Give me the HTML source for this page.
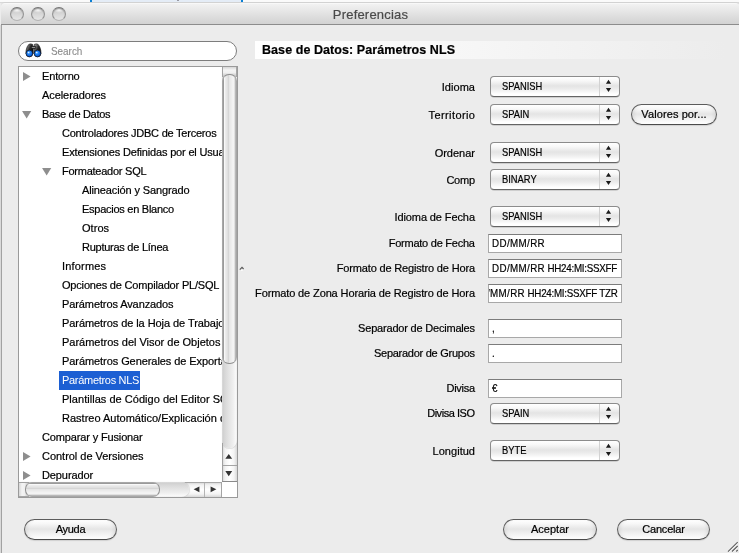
<!DOCTYPE html>
<html><head><meta charset="utf-8">
<style>
*{margin:0;padding:0;box-sizing:border-box}
html,body{width:739px;height:553px;overflow:hidden;background:#ececec;-webkit-text-stroke:0.2px currentColor;font-family:"Liberation Sans",sans-serif;font-size:11px;color:#000}
.a{position:absolute}
#topstrip{left:0;top:0;width:739px;height:3px;background:#fafafa;border-bottom:1px solid #d9d9d9}
#tsel{left:90px;top:0;width:153px;height:2px;background:#e4ecf6;border-left:2px solid #0a7fd3;border-right:2px solid #0a7fd3}
#win{left:1px;top:2px;width:739px;height:560px;border-top:1px solid #d2d2d2;border-top-left-radius:4px;border-top-right-radius:5px;background:#ececec;overflow:hidden;box-shadow:inset 1px 0 0 #c4c4c4}
#winl{left:1px;top:25px;width:1px;height:528px;background:#a2a2a2}
#shadowl{left:0;top:25px;width:1px;height:528px;background:#dadada}
#title{left:0;top:0;width:100%;height:22px;background:linear-gradient(#f2f2f2,#e8e8e8 30%,#d2d2d2);border-bottom:1px solid #8c8c8c;border-top:1px solid #f8f8f8}
#titleline{left:0;top:22px;width:100%;height:1px;background:#f6f6f6}
.tl{top:4px;width:14px;height:14px;border-radius:50%;border:1px solid #929292;border-top-color:#737373;border-bottom-color:#b4b4b4;background:radial-gradient(ellipse 45% 22% at 50% 18%,#f8f8f8 0,rgba(248,248,248,0) 100%) no-repeat,linear-gradient(#bdbdbd,#d2d2d2 35%,#dadada 60%,#e6e6e6);box-shadow:inset 0 1px 1px rgba(0,0,0,.25)}
#ttext{left:1px;top:7px;width:739px;text-align:center;font-size:13px;color:#4a4a4a;line-height:15px;letter-spacing:.2px}
.txt{white-space:nowrap;line-height:13px}
.lbl{white-space:nowrap;line-height:13px;text-align:right;right:264px}
.combo{left:490px;width:130px;height:21px;border:1px solid #8c8c8c;border-bottom-color:#646464;border-radius:4px;background:linear-gradient(#ffffff 0%,#f8f8f8 20%,#e4e4e4 47%,#ebebeb 62%,#ffffff 90%);box-shadow:0 0.5px 0.5px rgba(0,0,0,.25)}
.combo .v{position:absolute;left:11px;top:3px;line-height:13px;white-space:nowrap;transform:scaleX(0.85);transform-origin:0 0}
.combo .sep{position:absolute;left:108px;top:0;width:1px;height:19px;background:#d2d2d2}
.combo .arr{position:absolute;left:114px;top:1px}
.field{left:488px;width:134px;height:19px;background:#fff;border:1px solid #a8a8a8;border-top-color:#7c7c7c;overflow:hidden}
.field .v{position:absolute;left:3px;top:2px;line-height:13px;white-space:nowrap;transform:scaleX(0.89);transform-origin:0 0}
.field .vr{left:auto;right:3px;transform-origin:100% 0}
.btn{height:21px;border:1px solid #5c5c5c;border-bottom-color:#4a4a4a;border-radius:11px;background:linear-gradient(#ffffff 0%,#f7f7f7 20%,#e5e5e5 48%,#ededed 62%,#ffffff 100%);text-align:center;line-height:19px;box-shadow:0 1px 1px rgba(0,0,0,.12),inset 4px 0 4px -3px rgba(0,0,0,.10),inset -4px 0 4px -3px rgba(0,0,0,.10)}
#tree{left:18px;top:66px;width:220px;height:432px;background:#fff;border:1px solid #9a9a9a;overflow:hidden}
.ti{position:absolute;height:19px;line-height:19px;white-space:nowrap;letter-spacing:-0.3px}
.tri{position:absolute}
.tri-r{position:absolute;width:0;height:0;border-top:4.5px solid transparent;border-bottom:4.5px solid transparent;border-left:8px solid #8e8e8e}
.tri-d{position:absolute;width:0;height:0;border-left:4.5px solid transparent;border-right:4.5px solid transparent;border-top:8px solid #8e8e8e}

#vs{position:absolute;left:203px;top:0;width:15px;height:415px;border-bottom:1px solid #8a8a8a;background:linear-gradient(to right,#cfcfcf,#f2f2f2 20%,#ffffff 50%,#f4f4f4 80%,#d8d8d8)}
#vtrack{position:absolute;left:0;top:0;width:15px;height:381px;border-bottom-left-radius:7px 8px;border-bottom-right-radius:7px 8px;background:linear-gradient(to right,#dadada 0,#d2d2d2 1.5px,#d8d8d8 3px,#e4e4e4 7px,#efefef 11px,#f8f8f8 13.5px,#f0f0f0 15px);box-shadow:0 1px 1px rgba(0,0,0,.12)}
#vtop{position:absolute;left:0;top:0;width:15px;height:10px;border-left:1px solid #a2a2a2;border-right:1px solid #a6a6a6;background:linear-gradient(#d6d6d6,#f4f4f4 30%,#f0f0f0 55%,#c8c8c8 90%,#b4b4b4)}
#vthumb{position:absolute;left:0;top:7px;width:15px;height:290px;border:1px solid #8f8f8f;border-left-color:#a8a8a8;border-right-color:#a6a6a6;border-radius:7px;background:linear-gradient(to right,#9a9a9a 0.5px,#f8f8f8 1.5px,#ececec 2.5px,#e6e6e6 3.5px,#e0e0e0 4.5px,#d6d6d6 5.5px,#e6e6e6 6.5px,#eaeaea 7.5px,#eeeeee 8.5px,#f2f2f2 9.5px,#f4f4f4 11px,#b8b8b8 12.5px)}
#vbl{position:absolute;left:0;top:376px;width:1px;height:38px;background:#a0a0a0}
#vsep{position:absolute;left:0;top:398px;width:15px;height:1px;background:#a4a4a4}
#hs{position:absolute;left:0;top:415px;width:203px;height:15px;background:linear-gradient(#cfcfcf,#f2f2f2 20%,#ffffff 50%,#f4f4f4 80%,#d8d8d8)}
#htrack{position:absolute;left:0;top:0;width:170px;height:15px;border-top-right-radius:8px 7px;border-bottom-right-radius:8px 7px;background:linear-gradient(#dadada 0,#d2d2d2 1.5px,#d8d8d8 3px,#e4e4e4 7px,#efefef 11px,#f8f8f8 13.5px,#f0f0f0 15px);box-shadow:1px 0 1px rgba(0,0,0,.12)}
#hleft{position:absolute;left:0;top:0;width:10px;height:15px;border-top:1px solid #a2a2a2;border-bottom:1px solid #a6a6a6;background:linear-gradient(to right,#d6d6d6,#f4f4f4 30%,#f0f0f0 55%,#c8c8c8 90%,#b4b4b4)}
#hthumb{position:absolute;left:6px;top:0;width:135px;height:15px;border:1px solid #8f8f8f;border-top-color:#a8a8a8;border-bottom-color:#a6a6a6;border-radius:7px;background:linear-gradient(#9a9a9a 0.5px,#f8f8f8 1.5px,#ececec 2.5px,#e6e6e6 3.5px,#e0e0e0 4.5px,#d6d6d6 5.5px,#e6e6e6 6.5px,#eaeaea 7.5px,#eeeeee 8.5px,#f2f2f2 9.5px,#f4f4f4 11px,#b8b8b8 12.5px)}
#hsep{position:absolute;left:185px;top:0;width:1px;height:15px;background:#b4b4b4}
#corner{position:absolute;left:203px;top:415px;width:15px;height:15px;background:#fff}
.sarr{position:absolute}
.sel{background:#1c5fd3;color:#fff;-webkit-text-stroke:0}
#root{position:absolute;left:0;top:0;width:739px;height:553px;will-change:transform}
</style></head><body><div id="root">
<div id="topstrip" class="a"></div>
<div id="tsel" class="a"></div>
<div class="a" style="left:92px;top:2px;width:149px;height:1px;background:#cfd6de"></div>
<div class="a" style="left:177px;top:0;width:2px;height:1px;background:#9a9aa4"></div>
<div id="shadowl" class="a"></div>
<div id="win" class="a">
  <div id="title" class="a"></div>
  <div class="a tl" style="left:9px"></div>
  <div class="a tl" style="left:30px"></div>
  <div class="a tl" style="left:51px"></div>
</div>
<div id="winl" class="a"></div>
<div id="ttext" class="a">Preferencias</div>

<!-- search -->
<div class="a" style="left:18px;top:41px;width:219px;height:20px;border:1.5px solid #7d7d7d;border-radius:10px;background:#fff"></div>
<div class="a txt" style="left:50.5px;top:45px;color:#8a8a8a;transform:scaleX(.9);transform-origin:0 0;-webkit-text-stroke:0.1px #8a8a8a">Search</div>
<svg class="a" style="left:22px;top:41px" width="24" height="20" viewBox="0 0 24 20">
<defs>
<linearGradient id="bg1" x1="0" x2="1" y1="0" y2="0.6"><stop offset="0" stop-color="#b4b4b4"/><stop offset=".35" stop-color="#6a6a6a"/><stop offset=".6" stop-color="#2a2a2a"/><stop offset="1" stop-color="#0e0e0e"/></linearGradient>
<radialGradient id="lens" cx=".42" cy=".38" r=".65"><stop offset="0" stop-color="#8ec8ff"/><stop offset=".3" stop-color="#2a8af8"/><stop offset=".8" stop-color="#0a58d0"/><stop offset="1" stop-color="#05349a"/></radialGradient>
</defs>
<path d="M6.8 3.4Q8.6 2.4 10.6 3.4L11 8V12.5H3.9L4.2 9Q4.9 5.4 6.8 3.4Z" fill="url(#bg1)" stroke="#151515" stroke-width=".7"/>
<path d="M16.1 3.4Q14.3 2.4 12.3 3.4L11.9 8V12.5H19L18.7 9Q18 5.4 16.1 3.4Z" fill="url(#bg1)" stroke="#151515" stroke-width=".7"/>
<rect x="9.2" y="5" width="4.5" height="2.8" fill="#1e1e1e"/>
<rect x="9.8" y="5.9" width="3.3" height=".9" fill="#a8a8a8"/>
<circle cx="7.4" cy="12.5" r="3.4" fill="url(#lens)" stroke="#101010" stroke-width=".75"/>
<circle cx="15.5" cy="12.5" r="3.4" fill="url(#lens)" stroke="#101010" stroke-width=".75"/>
<circle cx="6.5" cy="11.4" r=".75" fill="#dff0ff"/>
<circle cx="14.6" cy="11.4" r=".75" fill="#dff0ff"/>
</svg>

<!-- tree -->
<div id="tree" class="a">
<svg class="tri" style="left:4px;top:5px" width="9" height="10" viewBox="0 0 9 10"><path d="M0 0L0 9L7.6 4.5Z" fill="#8e8e8e"/></svg>
<span class="ti" style="left:23px;top:0px;letter-spacing:-0.133px">Entorno</span>
<span class="ti" style="left:23px;top:19px;letter-spacing:-0.069px">Aceleradores</span>
<svg class="tri" style="left:3px;top:44px" width="10" height="9" viewBox="0 0 10 9"><path d="M0 -0.1L9.3 -0.1L4.65 7.5Z" fill="#8e8e8e"/></svg>
<span class="ti" style="left:23px;top:38px;letter-spacing:-0.307px">Base de Datos</span>
<span class="ti" style="left:43px;top:57px;letter-spacing:-0.226px">Controladores JDBC de Terceros</span>
<span class="ti" style="left:43px;top:76px;letter-spacing:-0.171px">Extensiones Definidas por el Usuario</span>
<svg class="tri" style="left:23px;top:101px" width="10" height="9" viewBox="0 0 10 9"><path d="M0 -0.1L9.3 -0.1L4.65 7.5Z" fill="#8e8e8e"/></svg>
<span class="ti" style="left:43px;top:95px;letter-spacing:-0.249px">Formateador SQL</span>
<span class="ti" style="left:63px;top:114px;letter-spacing:-0.120px">Alineación y Sangrado</span>
<span class="ti" style="left:63px;top:133px;letter-spacing:-0.261px">Espacios en Blanco</span>
<span class="ti" style="left:63px;top:152px;letter-spacing:0.050px">Otros</span>
<span class="ti" style="left:63px;top:171px;letter-spacing:-0.258px">Rupturas de Línea</span>
<span class="ti" style="left:43px;top:190px;letter-spacing:0.183px">Informes</span>
<span class="ti" style="left:43px;top:209px;letter-spacing:-0.184px">Opciones de Compilador PL/SQL</span>
<span class="ti" style="left:43px;top:228px;letter-spacing:-0.102px">Parámetros Avanzados</span>
<span class="ti" style="left:43px;top:247px;letter-spacing:-0.068px">Parámetros de la Hoja de Trabajo</span>
<span class="ti" style="left:43px;top:266px;letter-spacing:-0.012px">Parámetros del Visor de Objetos</span>
<span class="ti" style="left:43px;top:285px;letter-spacing:-0.071px">Parámetros Generales de Exportación</span>
<span class="ti sel" style="left:40px;top:304px;width:81px;padding-left:3px;letter-spacing:-0.303px">Parámetros NLS</span>
<span class="ti" style="left:43px;top:323px;letter-spacing:0.029px">Plantillas de Código del Editor SQL</span>
<span class="ti" style="left:43px;top:342px;letter-spacing:0.006px">Rastreo Automático/Explicación del Plan</span>
<span class="ti" style="left:23px;top:361px;letter-spacing:-0.144px">Comparar y Fusionar</span>
<svg class="tri" style="left:4px;top:385px" width="9" height="10" viewBox="0 0 9 10"><path d="M0 0L0 9L7.6 4.5Z" fill="#8e8e8e"/></svg>
<span class="ti" style="left:23px;top:380px;letter-spacing:-0.027px">Control de Versiones</span>
<svg class="tri" style="left:4px;top:404px" width="9" height="10" viewBox="0 0 9 10"><path d="M0 0L0 9L7.6 4.5Z" fill="#8e8e8e"/></svg>
<span class="ti" style="left:23px;top:399px;letter-spacing:-0.105px">Depurador</span>
<div id="vs"><div id="vtrack"></div><div id="vtop"></div><div id="vthumb"></div><div id="vsep"></div><div id="vbl"></div>
<svg class="sarr" style="left:0;top:381px" width="14" height="34" viewBox="0 0 14 34"><path d="M3.3 10.8H10.2L6.75 5.9Z M3.3 22.9H10.2L6.75 28.2Z" fill="#333"/></svg></div>
<div id="hs"><div id="htrack"></div><div id="hleft"></div><div id="hthumb"></div><div id="hsep"></div><div style="position:absolute;left:166px;top:0;width:37px;height:1px;background:#a8a8a8"></div><div style="position:absolute;left:202px;top:0;width:1px;height:15px;background:#a4a4a4"></div>
<svg class="sarr" style="left:170px;top:0px" width="33" height="14" viewBox="0 0 33 14"><path d="M10.4 4.4V10.2L4.6 7.3Z M21.6 4.4V10.2L27.4 7.3Z" fill="#333"/></svg></div>
<div id="corner"></div>
</div>

<svg class="a" style="left:239px;top:266px" width="6" height="6" viewBox="0 0 6 6"><path d="M0.8 3.6L3 1.3L4.6 3" stroke="#5a5a5a" stroke-width="1.1" fill="none"/><path d="M2.2 4.6L3.8 4.2" stroke="#fff" stroke-width="1" fill="none"/></svg>
<!-- header -->
<div class="a" style="left:255px;top:41px;width:470px;height:18px;background:linear-gradient(to right,#ffffff,#ececec)"></div>
<div class="a txt" style="left:262px;top:43px;font-weight:bold;font-size:12.5px;line-height:14px;letter-spacing:.07px">Base de Datos: Parámetros NLS</div>

<!-- form labels -->
<div class="a lbl" style="top:81px;letter-spacing:0.060px;margin-right:-0.060px">Idioma</div>
<div class="a lbl" style="top:109px;letter-spacing:0.414px;margin-right:-0.414px">Territorio</div>
<div class="a lbl" style="top:147px;letter-spacing:0.002px;margin-right:-0.002px">Ordenar</div>
<div class="a lbl" style="top:174px;letter-spacing:-0.242px;margin-right:0.242px">Comp</div>
<div class="a lbl" style="top:211px;letter-spacing:-0.101px;margin-right:0.101px">Idioma de Fecha</div>
<div class="a lbl" style="top:237px;letter-spacing:-0.237px;margin-right:0.237px">Formato de Fecha</div>
<div class="a lbl" style="top:262px;letter-spacing:-0.163px;margin-right:0.163px">Formato de Registro de Hora</div>
<div class="a lbl" style="top:287px;letter-spacing:-0.120px;margin-right:0.120px">Formato de Zona Horaria de Registro de Hora</div>
<div class="a lbl" style="top:322px;letter-spacing:-0.198px;margin-right:0.198px">Separador de Decimales</div>
<div class="a lbl" style="top:347px;letter-spacing:-0.266px;margin-right:0.266px">Separador de Grupos</div>
<div class="a lbl" style="top:382px;letter-spacing:-0.306px;margin-right:0.306px">Divisa</div>
<div class="a lbl" style="top:407px;letter-spacing:-0.456px;margin-right:0.456px">Divisa ISO</div>
<div class="a lbl" style="top:445px;letter-spacing:0.030px;margin-right:-0.030px">Longitud</div>

<!-- combos -->
<div class="a combo" style="top:76px"><span class="v">SPANISH</span><span class="sep"></span><svg class="arr" width="8" height="16" viewBox="0 0 8 16"><path d="M0.9 5.7H6.1L3.5 1.7Z M0.9 10H6.1L3.5 14Z" fill="#1a1a1a"/></svg></div>
<div class="a combo" style="top:104px"><span class="v">SPAIN</span><span class="sep"></span><svg class="arr" width="8" height="16" viewBox="0 0 8 16"><path d="M0.9 5.7H6.1L3.5 1.7Z M0.9 10H6.1L3.5 14Z" fill="#1a1a1a"/></svg></div>
<div class="a combo" style="top:142px"><span class="v">SPANISH</span><span class="sep"></span><svg class="arr" width="8" height="16" viewBox="0 0 8 16"><path d="M0.9 5.7H6.1L3.5 1.7Z M0.9 10H6.1L3.5 14Z" fill="#1a1a1a"/></svg></div>
<div class="a combo" style="top:169px"><span class="v">BINARY</span><span class="sep"></span><svg class="arr" width="8" height="16" viewBox="0 0 8 16"><path d="M0.9 5.7H6.1L3.5 1.7Z M0.9 10H6.1L3.5 14Z" fill="#1a1a1a"/></svg></div>
<div class="a combo" style="top:206px"><span class="v">SPANISH</span><span class="sep"></span><svg class="arr" width="8" height="16" viewBox="0 0 8 16"><path d="M0.9 5.7H6.1L3.5 1.7Z M0.9 10H6.1L3.5 14Z" fill="#1a1a1a"/></svg></div>
<div class="a combo" style="top:403px"><span class="v">SPAIN</span><span class="sep"></span><svg class="arr" width="8" height="16" viewBox="0 0 8 16"><path d="M0.9 5.7H6.1L3.5 1.7Z M0.9 10H6.1L3.5 14Z" fill="#1a1a1a"/></svg></div>
<div class="a combo" style="top:440px"><span class="v">BYTE</span><span class="sep"></span><svg class="arr" width="8" height="16" viewBox="0 0 8 16"><path d="M0.9 5.7H6.1L3.5 1.7Z M0.9 10H6.1L3.5 14Z" fill="#1a1a1a"/></svg></div>

<!-- fields -->
<div class="a field" style="top:234px"><span class="v" style="letter-spacing:.42px">DD/MM/RR</span></div>
<div class="a field" style="top:259px"><span class="v"><span style="letter-spacing:.42px">DD/MM/RR</span><span style="letter-spacing:-.29px"> HH24:MI:SSXFF</span></span></div>
<div class="a field" style="top:284px"><span class="v vr"><span style="letter-spacing:.42px">DD/MM/RR</span><span style="letter-spacing:-.29px"> HH24:MI:SSXFF TZ</span>R</span></div>
<div class="a field" style="top:319px"><span class="v">,</span></div>
<div class="a field" style="top:344px"><span class="v">.</span></div>
<div class="a field" style="top:379px"><span class="v">€</span></div>

<!-- buttons -->
<div class="a btn" style="left:631px;top:104px;width:86px;letter-spacing:.1px">Valores por...</div>
<div class="a btn" style="left:24px;top:519px;width:93px;letter-spacing:-.3px">Ayuda</div>
<div class="a btn" style="left:503px;top:519px;width:94px">Aceptar</div>
<div class="a btn" style="left:617px;top:519px;width:93px;letter-spacing:-.2px">Cancelar</div>
<svg class="a" style="left:725px;top:540px" width="14" height="13" viewBox="0 0 14 13"><g stroke="#fff" stroke-width="1" opacity=".8"><path d="M3.7 12.4L13.4 2.8M7.7 12.2L13.4 6.7M12 12.2L13.4 10.7"/></g><g stroke="#5e5e5e" stroke-width="1.1"><path d="M3 11.7L12.7 2.1M7 11.5L12.7 6M11.3 11.5L12.7 10"/></g></svg>
</div></body></html>
